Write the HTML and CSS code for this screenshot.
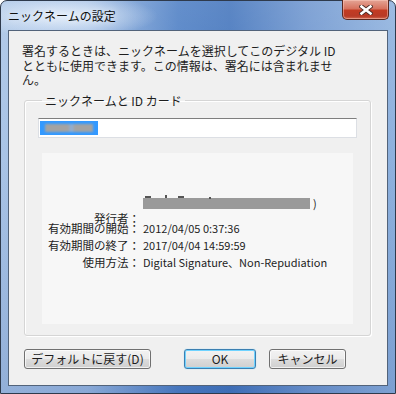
FILE: index.html
```html
<!DOCTYPE html>
<html lang="ja">
<head>
  <meta charset="UTF-8">
  <title>ニックネームの設定</title>
  <link rel="stylesheet" href="styles.css">
</head>
<body>
<div class="window">
  <div class="titlebar">
    <span class="title">ニックネームの設定</span>
    <span class="close-btn">
      <svg width="14" height="10" viewBox="0 0 14 10">
        <path d="M2.5 1.5 L11.5 8.5 M11.5 1.5 L2.5 8.5" stroke="#4a2a24" stroke-width="4.4" stroke-linecap="square"/>
        <path d="M2.5 1.5 L11.5 8.5 M11.5 1.5 L2.5 8.5" stroke="#fff" stroke-width="2.6" stroke-linecap="square"/>
      </svg>
    </span>
  </div>

  <div class="client">
    <p class="intro">署名するときは、ニックネームを選択してこのデジタル ID<br>とともに使用できます。この情報は、署名には含まれませ<br>ん。</p>

    <fieldset class="group">
      <legend>ニックネームと ID カード</legend>
      <div class="textbox"><span class="selection"><span class="blur"></span></span></div>

      <div class="details">
        <div class="row issuer">
          <span class="label">発行者：</span>
          <span class="value"><span class="marks"></span><span class="bar"></span>)</span>
        </div>
        <div class="row">
          <span class="label">有効期間の開始：</span>
          <span class="value">2012/04/05 0:37:36</span>
        </div>
        <div class="row">
          <span class="label">有効期間の終了：</span>
          <span class="value">2017/04/04 14:59:59</span>
        </div>
        <div class="row">
          <span class="label">使用方法：</span>
          <span class="value">Digital Signature、Non-Repudiation</span>
        </div>
      </div>
    </fieldset>

    <div class="buttons">
      <button class="btn btn-default">デフォルトに戻す(D)</button>
      <button class="btn btn-ok">OK</button>
      <button class="btn btn-cancel">キャンセル</button>
    </div>
  </div>
</div>
</body>
</html>
```

FILE: styles.css
```css
* {
  margin: 0;
  padding: 0;
  box-sizing: border-box;
}

body {
  width: 396px;
  height: 394px;
  font-family: "Noto Sans CJK JP", sans-serif;
  font-size: 12px;
  color: #1e1e1e;
  overflow: hidden;
}

.window {
  width: 396px;
  height: 394px;
  padding: 0 7px 7px;
  border: 1px solid #2e3a4c;
  border-radius: 7px 7px 0 0;
  background:
    radial-gradient(ellipse 95px 22px at 62px 15px, rgba(235, 243, 252, .9), rgba(235, 243, 252, 0)),
    linear-gradient(to bottom, rgba(255, 255, 255, .12), rgba(255, 255, 255, 0) 40%, rgba(20, 60, 140, .15)),
    linear-gradient(to right, #a9c4e6 0%, #9dbbe3 22%, #4f80c5 45%, #4576bd 58%, #7198d0 78%, #8fb2de 100%);
}

.titlebar {
  height: 29px;
  display: flex;
  align-items: flex-start;
}

.title {
  margin-top: 7px;
  line-height: 16px;
  color: #101010;
  text-shadow: 0 0 6px rgba(255, 255, 255, .8);
}

.close-btn {
  margin: -1px -1px 0 auto;
  width: 47px;
  height: 20px;
  border: 1px solid #5a2820;
  border-top: 0;
  border-radius: 0 0 5px 5px;
  background: linear-gradient(to bottom, #e4a596 0%, #d7735f 45%, #c23b23 55%, #b83a26 85%, #d26a50 100%);
  box-shadow: inset 0 0 0 1px rgba(255, 210, 200, .45);
  display: flex;
  align-items: center;
  justify-content: center;
}

.client {
  height: 356px;
  border: 1px solid #52637a;
  background: #f0f0f0;
  padding: 13px 16px 0 15px;
}

.intro {
  margin-left: -2px;
  line-height: 14.5px;
}

.group {
  margin-top: 6px;
  height: 242px;
  border: 1px solid #d5d5d5;
  border-radius: 3px;
  box-shadow: inset 1px 1px #fff, 1px 1px #fff;
  padding: 10px 13px 0;
}

.group legend {
  margin-left: 4px;
  padding: 0 3px;
  line-height: 14px;
}

.textbox {
  height: 20px;
  border: 1px solid #dcdfe4;
  border-top-color: #7e7e7e;
  background: #fff;
  padding: 2px 1px;
}

.selection {
  display: block;
  width: 58px;
  height: 14px;
  background: #3399ff;
  padding: 3px 5px;
}

.blur {
  display: block;
  height: 8px;
  background: linear-gradient(to right, #a3a3a3 0%, #a3a3a3 48%, #8fb0d8 55%, #a3a3a3 62%, #a3a3a3 100%);
  filter: blur(1px);
}

.details {
  margin: 15px 4px 0;
  height: 171px;
  background: #f7f7f7;
  padding-top: 42px;
  font-size: 11.5px;
}

.row {
  display: grid;
  grid-template-columns: 98px 1fr;
  column-gap: 3px;
  line-height: 17px;
}

.label {
  text-align: right;
}

.value {
  font-size: 11px;
}

.issuer {
  margin-bottom: 8px;
}

.issuer .label {
  position: relative;
  top: 15px;
}

.issuer .value {
  position: relative;
  display: flex;
  align-items: center;
}

.bar {
  display: block;
  width: 167px;
  height: 11px;
  margin-right: 3px;
  background: #9a9a9a;
}

.marks {
  position: absolute;
  left: 2px;
  top: 0;
  width: 70px;
  height: 4px;
  background:
    linear-gradient(#555, #555) 0 1px / 6px 2px no-repeat,
    linear-gradient(#555, #555) 20px 0 / 2px 3px no-repeat,
    linear-gradient(#555, #555) 33px 1px / 6px 2px no-repeat,
    linear-gradient(#555, #555) 64px 2px / 2px 3px no-repeat;
}

.buttons {
  margin-top: 13px;
  display: flex;
}

.btn {
  height: 20px;
  font-family: "Noto Sans CJK JP", sans-serif;
  font-size: 12px;
  color: #1e1e1e;
  border: 1px solid #707070;
  border-radius: 3px;
  background: linear-gradient(to bottom, #f2f2f2 0%, #ebebeb 50%, #dddddd 51%, #cfcfcf 100%);
  box-shadow: inset 0 0 0 1px rgba(255, 255, 255, .7);
}

.btn-default {
  width: 127px;
}

.btn-ok {
  width: 72px;
  margin-left: 33px;
  border-color: #3c7fb1;
  box-shadow: inset 0 0 0 1px #6fd3ff, 0 0 1px #6fd3ff;
}

.btn-cancel {
  width: 77px;
  margin-left: 13px;
}
```
